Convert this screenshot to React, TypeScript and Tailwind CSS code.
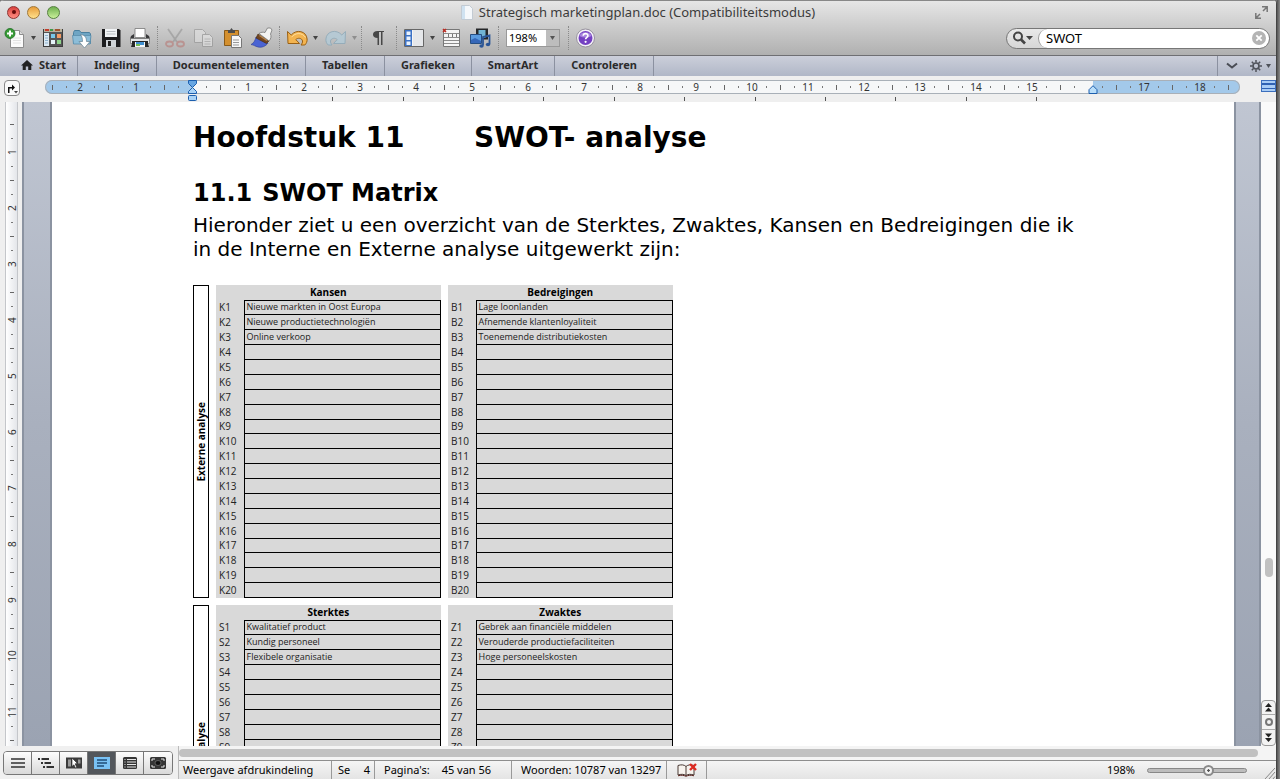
import type { ReactNode } from "react";

const tabs = ["Indeling", "Documentelementen", "Tabellen", "Grafieken", "SmartArt", "Controleren"];

const quadrants = {
  kansen: {
    title: "Kansen",
    code: "K",
    items: ["Nieuwe markten in Oost Europa", "Nieuwe productietechnologiën", "Online verkoop"],
  },
  bedreigingen: {
    title: "Bedreigingen",
    code: "B",
    items: ["Lage loonlanden", "Afnemende klantenloyaliteit", "Toenemende distributiekosten"],
  },
  sterktes: {
    title: "Sterktes",
    code: "S",
    items: ["Kwalitatief product", "Kundig personeel", "Flexibele organisatie"],
  },
  zwaktes: {
    title: "Zwaktes",
    code: "Z",
    items: ["Gebrek aan financiële middelen", "Verouderde productiefaciliteiten", "Hoge personeelskosten"],
  },
};

type QuadrantData = (typeof quadrants)["kansen"];

/* ---------- Toolbar ---------- */

function Tool({ label, children }: { label: string; children: ReactNode }) {
  return (
    <button aria-label={label} className="flex h-6 w-[29px] shrink-0 items-center justify-center">
      <svg width="22" height="22" viewBox="0 0 22 22" fill="none">
        {children}
      </svg>
    </button>
  );
}

function Arrow({ label, faded }: { label: string; faded?: boolean }) {
  return (
    <button aria-label={label} className={`flex h-6 w-2 shrink-0 items-center justify-center ${faded ? "opacity-40" : ""}`}>
      <svg width="5" height="4" viewBox="0 0 5 4">
        <path d="M0 0h5L2.500 4z" fill="#444" />
      </svg>
    </button>
  );
}

function Divider() {
  return (
    <div className="flex w-[6px] shrink-0 justify-center">
      <div className="h-6 border-l border-dotted border-[#8a8a8a]" />
    </div>
  );
}

function Toolbar() {
  return (
    <div className="flex h-8 items-center pb-[2px] pr-[6px]">
      <Tool label="Nieuw document">
        <path d="M6.500 3.500h9l4 4v13h-13z" fill="#fbfbfb" stroke="#8d8d8d" />
        <path d="M15.500 3.500v4h4" fill="#ddd" stroke="#8d8d8d" />
        <path d="M9 11h8M9 13.500h8M9 16h8" stroke="#e2e2e2" />
        <circle cx="6" cy="6.500" r="5" fill="#379b35" stroke="#1d6d22" strokeWidth=".8" />
        <path d="M6 3.500v6M3 6.500h6" stroke="#fff" strokeWidth="2" />
      </Tool>
      <Arrow label="Meer nieuw" />
      <div className="w-px" />
      <Tool label="Sjablonen">
        <rect x="1.500" y="2.500" width="19" height="17" fill="#555" stroke="#3d3d3d" />
        <path d="M2 2h18v3H2z" fill="#b9b09c" />
        <path d="M3 2h4v2H3z" fill="#c33c2c" />
        <path d="M8 2h3v2H8z" fill="#3d9a47" />
        <path d="M13 2h5v2h-5z" fill="#a1542f" />
        <path d="M2 6h5v13H2z" fill="#dce9f3" />
        <path d="M3 8.500h3M3 11h3M3 13.500h3M3 16h3" stroke="#8fb2cd" />
        <path d="M9 7h4v4H9z" fill="#77c6e8" />
        <path d="M15 7h4v4h-4z" fill="#f59a63" />
        <path d="M9 13h4v4H9z" fill="#e6f3f9" />
        <path d="M15 13h4v4h-4z" fill="#8ed48a" />
      </Tool>
      <Tool label="Openen">
        <path d="M2.500 16.500v-11l1-2h5l1.500 2h8.500l1 1.500v9.500z" fill="#6ea5c4" stroke="#4b809f" />
        <path d="M1.500 8.500h18.500l-1 8.500H2.500z" fill="#8cbdd8" stroke="#5a8eac" strokeWidth=".8" />
        <path d="M9.500 7.500c4.500.500 6 3 6 7H19L13.500 21 8 14.500h3.500c0-3-.5-5-2-7z" fill="#fff" stroke="#637f90" strokeWidth=".7" />
      </Tool>
      <Tool label="Opslaan">
        <path d="M2 2h17l1.500 1.500V20H2z" fill="#1d1d1f" />
        <path d="M5 2h12v8H5z" fill="#f1f3f5" />
        <path d="M6.500 4.500h9M6.500 7h9" stroke="#b9bec3" />
        <path d="M6 13h10v7H6z" fill="#cfd3d7" />
        <path d="M8 14h3v5H8z" fill="#222" />
      </Tool>
      <Tool label="Afdrukken">
        <path d="M2 9l3-2v4h12V7l3 2 1 3v2H1v-2z" fill="#3a3a3c" />
        <path d="M6 1.500h10v9H6z" fill="#fff" stroke="#777" strokeWidth=".8" />
        <path d="M1.500 11.500h19v5h-19z" fill="#e6e7e8" stroke="#777" strokeWidth=".8" />
        <path d="M3 14h16v3l1 3H2l1-3z" fill="#262626" />
        <path d="M6 15h10v5H6z" fill="#f4f7f9" />
        <path d="M7 15h8v3H7z" fill="#3f8fd0" />
        <path d="M7 17h4v2H7z" fill="#74bc53" />
      </Tool>
      <Divider />
      <Tool label="Knippen">
        <g opacity=".5">
          <path d="M4 2l9 13M18 2L9 15" stroke="#8b8b8b" strokeWidth="1.800" />
          <ellipse cx="5.500" cy="17" rx="3.500" ry="2.500" stroke="#b86d68" strokeWidth="1.800" />
          <ellipse cx="16.500" cy="17" rx="3.500" ry="2.500" stroke="#b86d68" strokeWidth="1.800" />
        </g>
      </Tool>
      <Tool label="Kopiëren">
        <g opacity=".5">
          <path d="M1.500 2.500h8l3 3v10h-11z" fill="#e8e8e8" stroke="#888" />
          <path d="M9.500 7.500h7l3 3v9h-10z" fill="#efefef" stroke="#888" />
          <path d="M11.500 12h6M11.500 14.500h6M11.500 17h6" stroke="#aaa" />
        </g>
      </Tool>
      <Tool label="Plakken">
        <path d="M2.500 3.500h14v15h-14z" fill="#d4902f" stroke="#8a5a18" />
        <path d="M6 4.500V3h2l1.500-2L11 3h2v3H6z" fill="#4d4d4d" />
        <path d="M9.500 8.500h7l3 3v9h-10z" fill="#f8f8f8" stroke="#777" />
        <path d="M11 13h6M11 15.500h6M11 18h6" stroke="#999" />
      </Tool>
      <Tool label="Opmaak kopiëren">
        <path d="M5 10c4 2 8 5 12 6-2 3-6 5-10 4-3-.7-4-2-7-2.500 3-1.500 4-4 5-7.500z" fill="#4a63d3" stroke="#2c3c96" strokeWidth=".6" />
        <path d="M7 7l11 7-2.500 2.500L5 11z" fill="#70451f" stroke="#442a12" strokeWidth=".6" />
        <path d="M8.500 8.500l7.500 5" stroke="#b98549" strokeWidth="1.500" />
        <path d="M8 6.500c2-1.500 4-1.500 6-1L16.500 1h3l1.500 2-1.500 4c1 2 .500 5-1.500 7z" fill="#f3f3f1" stroke="#777" strokeWidth=".8" />
      </Tool>
      <Divider />
      <Tool label="Herstellen">
        <path
          d="M1.500 4.500L2 16.500h11.500L9.800 12.600c1.800-2.100 6.200-1.700 6.700 1.400.2 1.500-.5 2.700-1.500 4h3.800c1.600-1.600 2.500-3.400 2.300-6C20.500 4 10.500 1.800 5.200 8z"
          fill="#f3b450"
          stroke="#9a6014"
        />
        <path d="M5.500 10.200c4-5 11-4.700 14 .3" stroke="#ffe0a0" />
      </Tool>
      <Arrow label="Meer herstellen" />
      <div className="w-[2px]" />
      <Tool label="Opnieuw">
        <path
          d="M20.500 4.500L20 16.500H8.500l3.700-3.900c-1.800-2.100-6.200-1.700-6.700 1.400-.2 1.500.5 2.700 1.500 4H3.200c-1.600-1.600-2.500-3.400-2.300-6C1.500 4 11.500 1.800 16.800 8z"
          fill="#b3cbd8"
          stroke="#8ca9b9"
          opacity=".8"
        />
      </Tool>
      <Arrow label="Meer opnieuw" faded />
      <Divider />
      <Tool label="Niet-afdrukbare tekens">
        <path d="M16 4v1h-1.500v13H13V5h-2v13H9.500v-7C6.500 11 5 9.500 5 7.500S6.500 4 9.500 4z" fill="#474747" />
      </Tool>
      <Divider />
      <Tool label="Zijbalk">
        <path d="M1.500 2.500h19v17h-19z" fill="#f4f4f4" stroke="#666" />
        <path d="M2 3h7v16H2z" fill="#3c72c6" />
        <path d="M3.500 4.500h4v3.500h-4zM3.500 9.500h4V13h-4zM3.500 14.500h4V18h-4z" fill="#eaf2fc" />
        <path d="M10 3h10v16H10z" fill="#e5e7ea" />
      </Tool>
      <Arrow label="Meer zijbalk" />
      <Tool label="Werkset">
        <path d="M3.500 2.500h16v17h-16z" fill="#f5f5f5" stroke="#777" />
        <path d="M4 6.500h15M4 10.500h15M4 13.500h15M4 16.500h15" stroke="#8c8c8c" />
        <path d="M8.500 7v3M12.500 7v3M16.500 7v3" stroke="#777" />
        <path d="M3 2l3 3M6 2L3 5" stroke="#bc2d24" strokeWidth="1.500" />
      </Tool>
      <Tool label="Mediabrowser">
        <path d="M7 1.500h12v11H7z" fill="#252729" />
        <path d="M9.500 3h7v8h-7z" fill="#71b4d4" />
        <path d="M1.500 7.500h11v9h-11z" fill="#5a9bdf" stroke="#264f83" />
        <path d="M2 13l4-2 6 3v2H2z" fill="#3567b8" />
        <path d="M14 18.500V10l6.500-1.500V17" stroke="#2a5596" strokeWidth="1.800" />
        <ellipse cx="12.500" cy="19" rx="2.200" ry="1.700" fill="#2a5596" />
        <ellipse cx="19" cy="17.500" rx="2.200" ry="1.700" fill="#2a5596" />
      </Tool>
      <div className="w-px" />
      <Divider />
      <div className="relative mx-[5px] flex h-[18px] w-[54px] shrink-0 border border-[#999] bg-white">
        <select
          aria-label="Zoomen"
          className="w-full appearance-none bg-transparent pl-[2px] text-[11px] leading-4 text-black"
          defaultValue="198%"
        >
          <option>198%</option>
        </select>
        <span className="pointer-events-none absolute inset-y-0 right-0 flex w-[13px] items-center justify-center bg-[#bdbdbd]">
          <svg width="5" height="4" viewBox="0 0 5 4">
            <path d="M0 0h5L2.500 4z" fill="#555" />
          </svg>
        </span>
      </div>
      <Divider />
      <Tool label="Help">
        <circle cx="10.500" cy="11" r="9" fill="#f4f1f8" stroke="#97929e" />
        <circle cx="10.500" cy="11" r="7" fill="#7440c2" />
        <path d="M4.300 9a6.500 5.500 0 0 1 12.400 0c-4 2-8.400 2-12.400 0z" fill="#a884df" />
        <path d="M8.200 8.800c.2-3 4.800-2.900 4.700-.1 0 1.700-2.300 1.800-2.300 3.600" stroke="#fff" strokeWidth="1.600" />
        <circle cx="10.600" cy="14.800" r="1.100" fill="#fff" />
      </Tool>
      <label className="ml-auto flex h-[21px] w-[264px] items-center overflow-hidden rounded-full border border-[#777] bg-gradient-to-b from-[#e9e9e9] to-[#d6d6d6]">
        <svg className="ml-[5px] mr-1 shrink-0" width="22" height="16" viewBox="0 0 22 16" fill="none">
          <circle cx="6" cy="6.500" r="4" stroke="#444" strokeWidth="2" />
          <path d="M9 9.500l4 4" stroke="#444" strokeWidth="2.600" />
          <path d="M14 6h7l-3.500 4z" fill="#444" />
        </svg>
        <span className="flex h-full min-w-0 flex-1 items-center rounded-full border-l border-[#999] bg-white pl-[7px] pr-[3px]">
          <input aria-label="Zoeken" className="min-w-0 flex-1 text-[13px] leading-4 text-black outline-none" defaultValue="SWOT" />
          <svg width="14" height="14" viewBox="0 0 14 14">
            <circle cx="7" cy="7" r="7" fill="#b4b4b4" />
            <path d="M4.300 4.300l5.400 5.400M9.700 4.300L4.300 9.700" stroke="#fff" strokeWidth="1.800" />
          </svg>
        </span>
      </label>
    </div>
  );
}

function TitleBar() {
  return (
    <div className="flex h-[22px] items-center px-[7px]">
      <div className="flex w-20 gap-[7px]">
        <button aria-label="Sluiten" className="flex size-[13px] items-center justify-center rounded-full border border-[#8f3230] bg-gradient-to-b from-[#d9403d] to-[#ff8c82]">
          <span className="size-1 rounded-full bg-[#650b0b]" />
        </button>
        <button aria-label="Minimaliseren" className="size-[13px] rounded-full border border-[#a17735] bg-gradient-to-b from-[#e79c36] to-[#ffe18a]" />
        <button aria-label="Vergroten" className="size-[13px] rounded-full border border-[#55803e] bg-gradient-to-b from-[#6fb04f] to-[#c9f09a]" />
      </div>
      <h1 className="flex flex-1 items-center justify-center gap-[6px] text-[13px] leading-5 text-[#3b3b3b]">
        <svg width="12" height="15" viewBox="0 0 12 15">
          <path d="M.5.500h8l3 3v11H.5z" fill="#f5f8fb" stroke="#c3cbd3" />
          <path d="M1 1h3v13H1z" fill="#cfe2f1" />
        </svg>
        Strategisch marketingplan.doc (Compatibiliteitsmodus)
      </h1>
      <div className="flex w-20 justify-end">
        <button aria-label="Volledig scherm">
          <svg width="15" height="15" viewBox="0 0 15 15" fill="none" stroke="#777" strokeWidth="1.500">
            <path d="M8 1.800h5.200V7M13 2L9 6M1.800 8v5.200H7M2 13l4-4" />
          </svg>
        </button>
      </div>
    </div>
  );
}

function Tabs() {
  return (
    <nav className="flex h-[21px] items-stretch border-t border-[#6f6f73] bg-gradient-to-b from-[#cccfda] to-[#b0b7c7] text-[11px] font-bold leading-[18px] text-[#2b2b2b]">
      <a href="#start" className="flex gap-[6px] border-r border-[#8b91a0] pl-[21px] pr-[11px]">
        <svg className="mt-1" width="12" height="10" viewBox="0 0 12 10">
          <path d="M6 0l6 5.500h-1.700V10H7.200V6.500H4.800V10H1.700V5.500H0z" fill="#222" />
        </svg>
        Start
      </a>
      {tabs.map((tab) => (
        <a key={tab} href={`#${tab.toLowerCase()}`} className="border-r border-[#8b91a0] px-4">
          {tab}
        </a>
      ))}
      <div className="ml-auto flex items-center gap-3 border-l border-[#8b91a0] pl-2 pr-[5px]">
        <button aria-label="Lint verbergen">
          <svg width="12" height="8" viewBox="0 0 12 8" fill="none">
            <path d="M1 1.500l5 4 5-4" stroke="#4a4d55" strokeWidth="2" />
          </svg>
        </button>
        <button aria-label="Lintinstellingen" className="flex items-center gap-1">
          <svg width="12" height="12" viewBox="0 0 12 12" fill="none" stroke="#4f525a">
            <circle cx="6" cy="6" r="3" strokeWidth="1.700" />
            <path d="M6 0v2.500M6 9.500V12M0 6h2.500M9.500 6H12M1.800 1.800l1.700 1.700M8.500 8.500l1.700 1.700M10.200 1.800L8.500 3.500M3.500 8.500l-1.700 1.700" strokeWidth="1.500" />
          </svg>
          <svg width="5" height="4" viewBox="0 0 5 4">
            <path d="M0 0h5L2.500 4z" fill="#4f525a" />
          </svg>
        </button>
      </div>
    </nav>
  );
}

/* ---------- Rulers ---------- */

// The zero point and the position under the right indent carry no number
const horizontalLabels = [2, 1, 0, 1, 2, 3, 4, 5, 6, 7, 8, 9, 10, 11, 12, 13, 14, 15, 0, 17, 18];
const verticalLabels = [1, 2, 3, 4, 5, 6, 7, 8, 9, 10, 11];

function HorizontalRuler() {
  return (
    <div className="flex h-[26px] bg-[#efefef] pt-1">
      <button aria-label="Tabstop" className="ml-1 mr-[25px] flex size-4 shrink-0 items-center justify-center rounded border border-[#888] bg-[#fafafa]">
        <svg width="12" height="11" viewBox="0 0 12 11">
          <path d="M2 10V4h4V1.500L9 4.500 6 7.500V5.500H3.500V10z" fill="#111" />
          <path d="M8 8h4l-2 2.500z" fill="#444" />
        </svg>
      </button>
      <div className="relative min-w-0">
        <div className="flex h-[14px] w-[1195px] items-center overflow-hidden rounded-full bg-[linear-gradient(to_right,#a3c9ea_147px,#f6f7f8_147px,#f6f7f8_1048px,#a3c9ea_1048px)] text-[10px] leading-3 text-[#333] ring-1 ring-inset ring-[#a9b0b8]">
          {horizontalLabels.map((label, i) => (
            <div key={i} className="flex shrink-0">
              <span className="flex w-[14px] items-center justify-center"><i className="h-[5px] w-px bg-[#666]" /></span>
              <span className="flex w-[14px] items-center justify-center"><i className="h-[2px] w-px bg-[#777]" /></span>
              <span className="flex h-3 w-[14px] items-center justify-center whitespace-nowrap">{label || ""}</span>
              <span className="flex w-[14px] items-center justify-center"><i className="h-[2px] w-px bg-[#777]" /></span>
            </div>
          ))}
          <span className="flex w-[14px] shrink-0 items-center justify-center"><i className="h-[5px] w-px bg-[#666]" /></span>
        </div>
        <svg width="1195" height="7" viewBox="0 0 1195 7">
          {Array.from({ length: 12 }, (_, i) => (
            <rect key={i} x={Math.round(217 + i * 70.36)} y="3" width="1" height="4" fill="#555" />
          ))}
        </svg>
        <svg className="absolute left-[142px] top-0" width="11" height="21" viewBox="0 0 11 21">
          <path d="M1.500.500h8v3l-4 4-4-4z" fill="#67a6e3" stroke="#1d5fae" />
          <path d="M5.500 7.500l4 4v2h-8v-2z" fill="#a9d3f7" stroke="#1d5fae" />
          <rect x="1.500" y="15.500" width="8" height="5" rx="1" fill="#a9d3f7" stroke="#1d5fae" />
        </svg>
        <svg className="absolute left-[1043px] top-[5px]" width="10" height="9" viewBox="0 0 10 9">
          <path d="M5 .700l4 4v3.800H1V4.700z" fill="#b9defa" stroke="#1d5fae" />
        </svg>
      </div>
      <button aria-label="Venster splitsen" className="ml-auto flex h-3 w-[15px] shrink-0 flex-col justify-evenly border border-[#3c6fbd] bg-[#a9cdf5]">
        <span className="h-[2px] w-full bg-[#2f62b3]" />
        <span className="h-px w-full bg-[#2f62b3]" />
      </button>
    </div>
  );
}

function VerticalRuler() {
  return (
    <div className="w-[22px] shrink-0 overflow-hidden bg-[#efefef] pl-[5px]">
      <div className="h-full w-[13px] border-x border-[#c4c6ca] bg-gradient-to-r from-white to-[#e4e6ea] pt-[15px] text-[10px] leading-3 text-[#333]">
        {verticalLabels.map((label) => (
          <div key={label}>
            <span className="flex h-[14px] items-center justify-center"><i className="h-px w-1 bg-[#666]" /></span>
            <span className="flex h-[14px] items-center justify-center"><i className="h-px w-[2px] bg-[#777]" /></span>
            <span className="flex h-[14px] -rotate-90 items-center justify-center">{label}</span>
            <span className="flex h-[14px] items-center justify-center"><i className="h-px w-[2px] bg-[#777]" /></span>
          </div>
        ))}
        <span className="flex h-[14px] items-center justify-center"><i className="h-px w-1 bg-[#666]" /></span>
      </div>
    </div>
  );
}

/* ---------- Document ---------- */

function Quadrant({ data, count }: { data: QuadrantData; count: number }) {
  return (
    <table
      className={`${count === 20 ? "h-[313px]" : "h-[150px]"} w-[225px] table-fixed border-collapse bg-[#d9d9d9] text-[9px] leading-3 text-[#222]`}
    >
      <thead>
        <tr className="h-[15px]">
          <th className="w-7 p-0" />
          <th className="p-0 pr-7 text-[10px] font-bold leading-3 text-black">{data.title}</th>
        </tr>
      </thead>
      <tbody>
        {Array.from({ length: count }, (_, i) => (
          <tr key={i} className="h-[14px]">
            <th scope="row" className="p-0 pl-[3px] text-left text-[10px] font-normal leading-3">
              {data.code}
              {i + 1}
            </th>
            <td className="whitespace-nowrap border border-black p-0 pl-[2px] leading-3">{data.items[i]}</td>
          </tr>
        ))}
      </tbody>
    </table>
  );
}

type BandProps = { label: string; left: QuadrantData; right: QuadrantData; count?: number };

function Band({ label, left, right, count = 20 }: BandProps) {
  return (
    <section className="flex items-start gap-[7px] font-['Open_Sans',sans-serif]">
      <div className="flex h-[313px] w-4 items-center justify-center border border-black">
        <span className="rotate-180 text-[10px] font-bold leading-3 text-black [writing-mode:vertical-rl]">{label}</span>
      </div>
      <Quadrant data={left} count={count} />
      <Quadrant data={right} count={count} />
    </section>
  );
}

function Page() {
  return (
    <article className="min-w-0 flex-1 overflow-hidden bg-white pl-[141px] pr-[150px] pt-[18px] font-['DejaVu_Sans',Verdana,sans-serif] text-black">
      <h2 className="flex text-[28px] font-bold leading-9">
        <span className="w-[281px]">Hoofdstuk 11</span>
        <span>SWOT- analyse</span>
      </h2>
      <h3 className="mt-5 flex gap-[10px] text-[24px] font-bold leading-[34px]">
        <span>11.1</span>
        <span>SWOT Matrix</span>
      </h3>
      <p className="mt-[3px] text-[20px] leading-6">
        Hieronder ziet u een overzicht van de Sterktes, Zwaktes, Kansen en Bedreigingen die ik
        <br />
        in de Interne en Externe analyse uitgewerkt zijn:
      </p>
      <div className="mt-6 flex flex-col gap-[7px]">
        <Band label="Externe analyse" left={quadrants.kansen} right={quadrants.bedreigingen} />
        <Band label="Interne analyse" left={quadrants.sterktes} right={quadrants.zwaktes} count={9} />
      </div>
    </article>
  );
}

function Scroller() {
  return (
    <div className="flex w-[15px] shrink-0 flex-col items-center bg-[#fafafa]">
      <div className="flex-[456]" />
      <div className="h-[19px] w-2 rounded-full bg-[#c1c1c1]" />
      <div className="flex-[123]" />
      <div className="flex w-full flex-col divide-y divide-[#aaa] rounded border border-[#999] bg-[#f3f3f3]">
        <button aria-label="Vorige pagina" className="flex h-[14px] items-center justify-center">
          <svg width="7" height="9" viewBox="0 0 7 9"><path d="M3.500 0L7 4H0zM3.500 4.500L7 8.500H0z" fill="#222" /></svg>
        </button>
        <button aria-label="Bladerobject" className="flex h-[15px] items-center justify-center">
          <span className="size-2 rounded-full border-2 border-[#777]" />
        </button>
        <button aria-label="Volgende pagina" className="flex h-[15px] items-center justify-center">
          <svg width="7" height="9" viewBox="0 0 7 9"><path d="M0 .500h7l-3.500 4zM0 5h7L3.500 9z" fill="#222" /></svg>
        </button>
      </div>
    </div>
  );
}

/* ---------- Footer ---------- */

function ViewButton({ label, active, children }: { label: string; active?: boolean; children: ReactNode }) {
  return (
    <button
      aria-label={label}
      className={`flex w-7 items-center justify-center ${active ? "bg-[#53575c]" : "bg-gradient-to-b from-[#fdfdfd] to-[#d9d9d9]"}`}
    >
      <svg width="18" height="14" viewBox="0 0 18 14" fill="none">
        {children}
      </svg>
    </button>
  );
}

function Footer() {
  return (
    <footer className="flex h-[33px] bg-[#f0f0f0]">
      <div className="ml-[3px] mt-[5px] flex h-6 shrink-0 divide-x divide-[#777] overflow-hidden rounded border border-[#777]">
        <ViewButton label="Conceptweergave">
          <path d="M2 3h14M2 7h14M2 11h14" stroke="#333" strokeWidth="1.600" />
        </ViewButton>
        <ViewButton label="Overzichtsweergave">
          <path d="M1 3h2M4.500 3H12M4 7h2M7.500 7H14M6 11h2M9.500 11H17" stroke="#333" strokeWidth="1.800" />
        </ViewButton>
        <ViewButton label="Publicatie-indeling">
          <path d="M1 1.500h16v11H1z" fill="#3b3b3b" />
          <path d="M3 3.500h3v7H3zM13 3.500h2.500v4H13z" fill="#999" />
          <path d="M7 2l5.500 5.500-2.300.300 1.500 3.500-1.500.700L9 8.800l-2 1.700z" fill="#fff" stroke="#222" strokeWidth=".6" />
        </ViewButton>
        <ViewButton label="Afdrukweergave" active>
          <path d="M1 1h16v12H1z" fill="#79c2f5" />
          <path d="M4 4h10M4 7h10M4 10h7" stroke="#1f4d78" strokeWidth="1.500" />
        </ViewButton>
        <ViewButton label="Notitieblok">
          <rect x="2" y="1" width="14" height="12" rx="1.500" fill="#353535" />
          <path d="M6 3.500h9M6 6h9M6 8.500h9M6 11h9" stroke="#e6e6e6" />
          <path d="M3.500 3.500h1M3.500 6h1M3.500 8.500h1M3.500 11h1" stroke="#e6e6e6" />
        </ViewButton>
        <ViewButton label="Volledig scherm">
          <rect x="1" y="1" width="16" height="12" rx="1.500" fill="#353535" />
          <path d="M3 5V3h3M12 3h3v2M15 9v2h-3M6 11H3V9" stroke="#e6e6e6" />
          <ellipse cx="9" cy="7" rx="3" ry="2.500" fill="#111" stroke="#888" strokeWidth=".6" />
        </ViewButton>
      </div>
      <div className="ml-[5px] flex min-w-0 flex-1 flex-col border-l border-[#bbb]">
        <div className="flex h-[15px] items-center border-b border-[#8e8e8e] bg-[#f4f4f4] pr-[18px]">
          <div className="h-2 flex-1 rounded-full bg-[#c1c1c1]" />
        </div>
        <div className="flex flex-1 items-stretch divide-x divide-[#999] whitespace-nowrap bg-gradient-to-b from-[#f5f5f5] to-[#e4e4e4] text-[11px] leading-[18px] text-black">
          <span className="w-[153px] pl-1">Weergave afdrukindeling</span>
          <span className="flex w-[43px] justify-between pl-[6px] pr-1">
            <span>Se</span>
            <span>4</span>
          </span>
          <span className="flex w-[137px] gap-3 pl-[9px]">
            <span>Pagina's:</span>
            <span>45 van 56</span>
          </span>
          <span className="w-[155px] pl-[9px]">Woorden: 10787 van 13297</span>
          <button aria-label="Spellingcontrole" className="flex w-10 items-center justify-center">
            <svg width="20" height="14" viewBox="0 0 20 14" fill="none">
              <path d="M1 2.500c3-1 6-1 8 1 2-2 5-2 8-1V12c-3-1-6-1-8 .500C7 11 4 11 1 12z" fill="#f7f3ee" stroke="#4a3a35" />
              <path d="M9 3.500v9" stroke="#4a3a35" />
              <path d="M1 12.800c3-1 6-.5 8 .5 2-1 5-1.500 8-.5" stroke="#5d2520" />
              <path d="M13 1l6 6M19 1l-6 6" stroke="#dd2a22" strokeWidth="2.400" />
            </svg>
          </button>
          <div className="flex flex-1 items-center justify-end">
            <label htmlFor="zoom">198%</label>
            <input
              id="zoom"
              type="range"
              min="0"
              max="100"
              defaultValue="63"
              className="ml-3 mr-4 h-[5px] w-[100px] appearance-none rounded border border-[#888] bg-[#bdbdbd] [&::-webkit-slider-thumb]:size-[11px] [&::-webkit-slider-thumb]:appearance-none [&::-webkit-slider-thumb]:rounded-full [&::-webkit-slider-thumb]:border-2 [&::-webkit-slider-thumb]:border-[#8a8a8a] [&::-webkit-slider-thumb]:bg-[radial-gradient(#555_20%,#f2f2f2_30%)]"
            />
            <svg className="self-end" width="13" height="12" viewBox="0 0 13 12" stroke="#888">
              <path d="M2 12L12 1M6 12l6-7M10 12l2-2.500" />
            </svg>
          </div>
        </div>
      </div>
    </footer>
  );
}

export default function App() {
  return (
    <div className="flex h-screen bg-[#777] font-['Noto_Sans',sans-serif]">
      <div className="flex min-w-0 flex-1 flex-col overflow-hidden rounded-t border-r border-[#444] bg-[#efefef]">
        <header className="border-t border-[#888] bg-gradient-to-b from-[#e6e6e6] to-[#b0b0b0]">
          <TitleBar />
          <Toolbar />
        </header>
        <Tabs />
        <HorizontalRuler />
        <main className="flex min-h-0 flex-1">
          <VerticalRuler />
          <div className="w-[30px] shrink-0 border-x-2 border-[#8b93a1] bg-gradient-to-b from-[#c0c6d2] via-[#a9b0be] to-[#9ba3b2]" />
          <Page />
          <div className="w-[27px] shrink-0 border-x-2 border-[#8b93a1] bg-gradient-to-b from-[#c0c6d2] via-[#a9b0be] to-[#9ba3b2]" />
          <Scroller />
        </main>
        <Footer />
      </div>
      <div className="w-[3px] shrink-0 bg-gradient-to-r from-[#555] to-[#8a8a8a]" />
    </div>
  );
}
